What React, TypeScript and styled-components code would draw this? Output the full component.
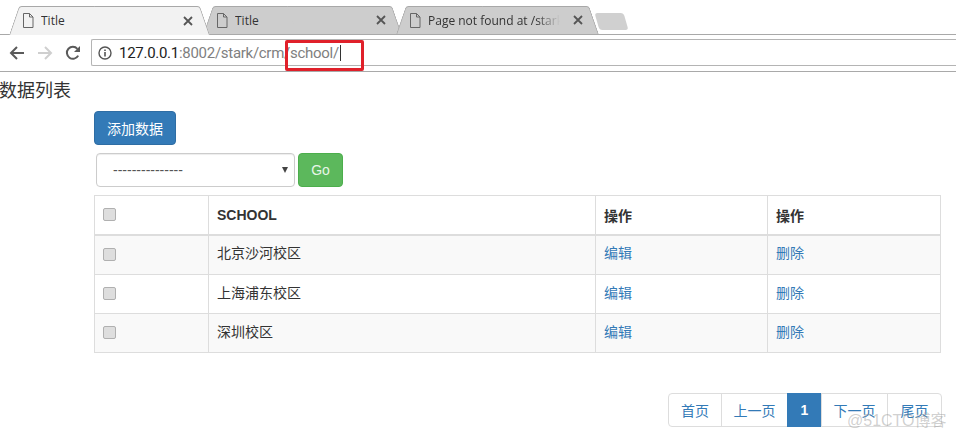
import React from 'react';
import styled, { createGlobalStyle } from 'styled-components';

const CJK = `'Liberation Sans', 'Noto Sans CJK SC', sans-serif`;

const GlobalStyle = createGlobalStyle`
  html, body {
    margin: 0;
    padding: 0;
    background: #fff;
  }
  * {
    box-sizing: border-box;
  }
`;

const Page = styled.div`
  position: relative;
  width: 956px;
  height: 440px;
  overflow: hidden;
  background: #fff;
  color: #333;
  font-family: ${CJK};
`;

const TabStrip = styled.div`
  height: 35px;
  padding: 6px 0 0 14px;
  display: flex;
  align-items: flex-start;
  border-bottom: 1px solid #a9a9a9;
`;

const Tab = styled.div<{ $active?: boolean; $width: number }>`
  position: relative;
  z-index: ${(p) => (p.$active ? 2 : 1)};
  width: ${(p) => p.$width}px;
  height: ${(p) => (p.$active ? 29 : 28)}px;
  margin-right: 4px;
  padding: 0 11px 0 8px;
  display: flex;
  align-items: center;
  gap: 7px;

  &::before,
  &::after {
    content: '';
    position: absolute;
    z-index: -1;
    top: 0;
    bottom: 0;
    width: 55%;
    background: ${(p) => (p.$active ? '#f2f2f2' : '#cdcdcd')};
    border-top: 1px solid #a8a8a8;
  }

  &::before {
    left: 0;
    border-left: 1px solid #a8a8a8;
    border-top-left-radius: 3px;
    transform: skewX(-19deg);
  }

  &::after {
    right: 0;
    border-right: 1px solid #a8a8a8;
    border-top-right-radius: 3px;
    transform: skewX(19deg);
  }
`;

const TabTitle = styled.span<{ $fade?: boolean }>`
  flex: 1;
  min-width: 0;
  margin-right: ${(p) => (p.$fade ? 6 : 0)}px;
  overflow: hidden;
  white-space: nowrap;
  font: 12px 'Open Sans', sans-serif;
  color: #333;
  mask-image: ${(p) => (p.$fade ? 'linear-gradient(to right, #000 82%, transparent 100%)' : 'none')};
`;

const NewTab = styled.div`
  width: 29px;
  height: 17px;
  margin: 7px 0 0 -1px;
  background: #d0d0d0;
  border-radius: 3px;
  transform: skewX(16deg);
`;

const Toolbar = styled.div`
  height: 37px;
  padding: 4px 0 5px;
  display: flex;
  align-items: stretch;
  border-bottom: 1px solid #a9a9a9;
  background: #fff;
`;

const NavButtons = styled.div`
  width: 91px;
  padding: 0 10px 0 9px;
  display: flex;
  align-items: center;
  justify-content: space-between;
`;

const AddressBar = styled.div`
  flex: 1;
  display: flex;
  align-items: center;
  gap: 7px;
  padding-left: 6px;
  border: 1px solid #b4b4b4;
  border-right: 0;
  border-radius: 2px 0 0 2px;
`;

const Url = styled.span`
  font: 15px Roboto, sans-serif;
  letter-spacing: -0.28px;
  color: #808080;
  white-space: nowrap;
`;

const UrlHost = styled.span`
  color: #222;
`;

const Caret = styled.span`
  display: inline-block;
  width: 1px;
  height: 16px;
  margin-left: 1px;
  background: #333;
  vertical-align: -3px;
`;

const RedMark = styled.div`
  position: absolute;
  left: 285px;
  top: 40px;
  width: 79px;
  height: 31px;
  border: 3px solid #e0202a;
  border-radius: 2px;
`;

const Heading = styled.div`
  height: 39px;
  margin-left: -1px;
  padding-top: 7px;
  font-size: 18px;
  line-height: 24px;
  color: #333;
`;

const Content = styled.div`
  margin-left: 94px;
  width: 847px;
`;

const AddButton = styled.button`
  display: block;
  width: 82px;
  height: 34px;
  padding: 0;
  border: 1px solid #2e6da4;
  border-radius: 4px;
  background: #337ab7;
  color: #fff;
  font: 14px ${CJK};
`;

const FilterRow = styled.div`
  display: flex;
  gap: 3px;
  margin: 8px 0 8px 2px;
`;

const FakeSelect = styled.div`
  width: 199px;
  height: 34px;
  padding: 0 6px 0 16px;
  display: flex;
  align-items: center;
  justify-content: space-between;
  border: 1px solid #ccc;
  border-radius: 4px;
  box-shadow: inset 0 1px 1px rgba(0, 0, 0, 0.075);
  font-size: 14px;
  color: #555;
`;

const SelectArrow = styled.span`
  width: 0;
  height: 0;
  border-left: 3.5px solid transparent;
  border-right: 3.5px solid transparent;
  border-top: 6px solid #444;
`;

const GoButton = styled.button`
  width: 45px;
  height: 34px;
  padding: 0;
  border: 1px solid #4cae4c;
  border-radius: 4px;
  background: #5cb85c;
  color: #e8f5e8;
  font: 14px 'Liberation Sans', sans-serif;
`;

const Table = styled.table`
  width: 847px;
  table-layout: fixed;
  border-collapse: collapse;
  font-size: 14px;
`;

const Row = styled.tr<{ $striped?: boolean }>`
  height: 39px;
  background: ${(p) => (p.$striped ? '#f9f9f9' : '#fff')};

  &:first-child {
    height: 40px;
  }
`;

const HeadCell = styled.th<{ $width?: number }>`
  width: ${(p) => (p.$width ? `${p.$width}px` : 'auto')};
  height: 39px;
  padding: 1px 8px 0 8px;
  text-align: left;
  vertical-align: middle;
  font-weight: 700;
  color: #333;
  border: 1px solid #ddd;
  border-bottom-width: 2px;
`;

const CheckHeadCell = styled(HeadCell)`
  padding-top: 0;
  padding-bottom: 4px;
`;

const Cell = styled.td`
  padding: 0 8px 5px 8px;
  vertical-align: middle;
  color: #333;
  border: 1px solid #ddd;
`;

const RowCheck = styled.input.attrs({ type: 'checkbox' })`
  appearance: none;
  display: block;
  width: 13px;
  height: 13px;
  margin: 0;
  position: relative;
  top: 2px;
  background: #dedede;
  border: 1px solid #b0b0b0;
  border-radius: 2px;
`;

const ActionLink = styled.a`
  color: #337ab7;
  text-decoration: none;
`;

const Pagination = styled.div`
  display: flex;
  justify-content: flex-end;
  margin: 40px 14px 0 0;
  height: 34px;
`;

const PageItem = styled.a<{ $active?: boolean; $width: number }>`
  width: ${(p) => p.$width}px;
  margin-left: -1px;
  display: flex;
  align-items: center;
  justify-content: center;
  font-size: 14px;
  font-weight: ${(p) => (p.$active ? 700 : 400)};
  color: ${(p) => (p.$active ? '#fff' : '#337ab7')};
  background: ${(p) => (p.$active ? '#337ab7' : '#fff')};
  border: 1px solid ${(p) => (p.$active ? '#337ab7' : '#ddd')};

  &:first-child {
    border-radius: 4px 0 0 4px;
  }

  &:last-child {
    border-radius: 0 4px 4px 0;
  }
`;

const Watermark = styled.div`
  position: absolute;
  left: 847px;
  top: 411px;
  font-size: 16px;
  line-height: 20px;
  color: rgba(150, 150, 150, 0.45);
  white-space: nowrap;
`;

const FileIcon = () => (
  <svg width="12" height="15" viewBox="0 0 12 15" fill="none" stroke="#666" strokeWidth="1">
    <path d="M1.5 0.5h6l3.5 3.5v10.5h-9.5z" />
    <path d="M7.5 0.5v3.5h3.5" />
  </svg>
);

const CloseIcon = () => (
  <svg width="10" height="10" viewBox="0 0 10 10" stroke="#555" strokeWidth="1.8">
    <path d="M1 1l8 8M9 1l-8 8" />
  </svg>
);

const ArrowLeft = ({ color }: { color: string }) => (
  <svg width="16" height="16" viewBox="0 0 16 16" fill="none" stroke={color} strokeWidth="2">
    <path d="M15 8H2M8 2L2 8l6 6" />
  </svg>
);

const ArrowRight = ({ color }: { color: string }) => (
  <svg width="16" height="16" viewBox="0 0 16 16" fill="none" stroke={color} strokeWidth="2">
    <path d="M1 8h13M8 2l6 6-6 6" />
  </svg>
);

const ReloadIcon = () => (
  <svg width="16" height="16" viewBox="0 0 16 16" fill="none">
    <path d="M13.2 10.6A6 6 0 1 1 12.4 3.8" stroke="#5a5a5a" strokeWidth="2" />
    <path d="M15 1v6H9z" fill="#5a5a5a" />
  </svg>
);

const InfoIcon = () => (
  <svg width="14" height="14" viewBox="0 0 14 14" fill="none" stroke="#555">
    <circle cx="7" cy="7" r="6" strokeWidth="1.4" />
    <path d="M7 6v4.4" strokeWidth="1.6" />
    <path d="M7 3.4v1.5" strokeWidth="1.6" />
  </svg>
);

const schools = ['北京沙河校区', '上海浦东校区', '深圳校区'];

const pages = [
  { label: '首页', width: 54 },
  { label: '上一页', width: 67 },
  { label: '1', width: 35, active: true },
  { label: '下一页', width: 67 },
  { label: '尾页', width: 55 },
];

const tabs = [
  { title: 'Title', width: 190, active: true },
  { title: 'Title', width: 189 },
  { title: 'Page not found at /stark', width: 193, fade: true },
];

export default function App() {
  return (
    <Page>
      <GlobalStyle />
      <TabStrip>
        {tabs.map((tab, i) => (
          <Tab key={i} $active={tab.active} $width={tab.width}>
            <FileIcon />
            <TabTitle $fade={tab.fade}>{tab.title}</TabTitle>
            <CloseIcon />
          </Tab>
        ))}
        <NewTab />
      </TabStrip>
      <Toolbar>
        <NavButtons>
          <ArrowLeft color="#5a5a5a" />
          <ArrowRight color="#cfcfcf" />
          <ReloadIcon />
        </NavButtons>
        <AddressBar>
          <InfoIcon />
          <Url>
            <UrlHost>127.0.0.1</UrlHost>:8002/stark/crm/school/
            <Caret />
          </Url>
        </AddressBar>
      </Toolbar>
      <RedMark />
      <Heading>数据列表</Heading>
      <Content>
        <AddButton>添加数据</AddButton>
        <FilterRow>
          <FakeSelect>
            ---------------
            <SelectArrow />
          </FakeSelect>
          <GoButton>Go</GoButton>
        </FilterRow>
        <Table>
          <thead>
            <tr>
              <CheckHeadCell $width={114}>
                <RowCheck />
              </CheckHeadCell>
              <HeadCell $width={387}>SCHOOL</HeadCell>
              <HeadCell $width={172}>操作</HeadCell>
              <HeadCell>操作</HeadCell>
            </tr>
          </thead>
          <tbody>
            {schools.map((school, i) => (
              <Row key={school} $striped={i % 2 === 0}>
                <Cell>
                  <RowCheck />
                </Cell>
                <Cell>{school}</Cell>
                <Cell>
                  <ActionLink>编辑</ActionLink>
                </Cell>
                <Cell>
                  <ActionLink>删除</ActionLink>
                </Cell>
              </Row>
            ))}
          </tbody>
        </Table>
      </Content>
      <Pagination>
        {pages.map((item) => (
          <PageItem key={item.label} $active={item.active} $width={item.width}>
            {item.label}
          </PageItem>
        ))}
      </Pagination>
      <Watermark>@51CTO博客</Watermark>
    </Page>
  );
}
